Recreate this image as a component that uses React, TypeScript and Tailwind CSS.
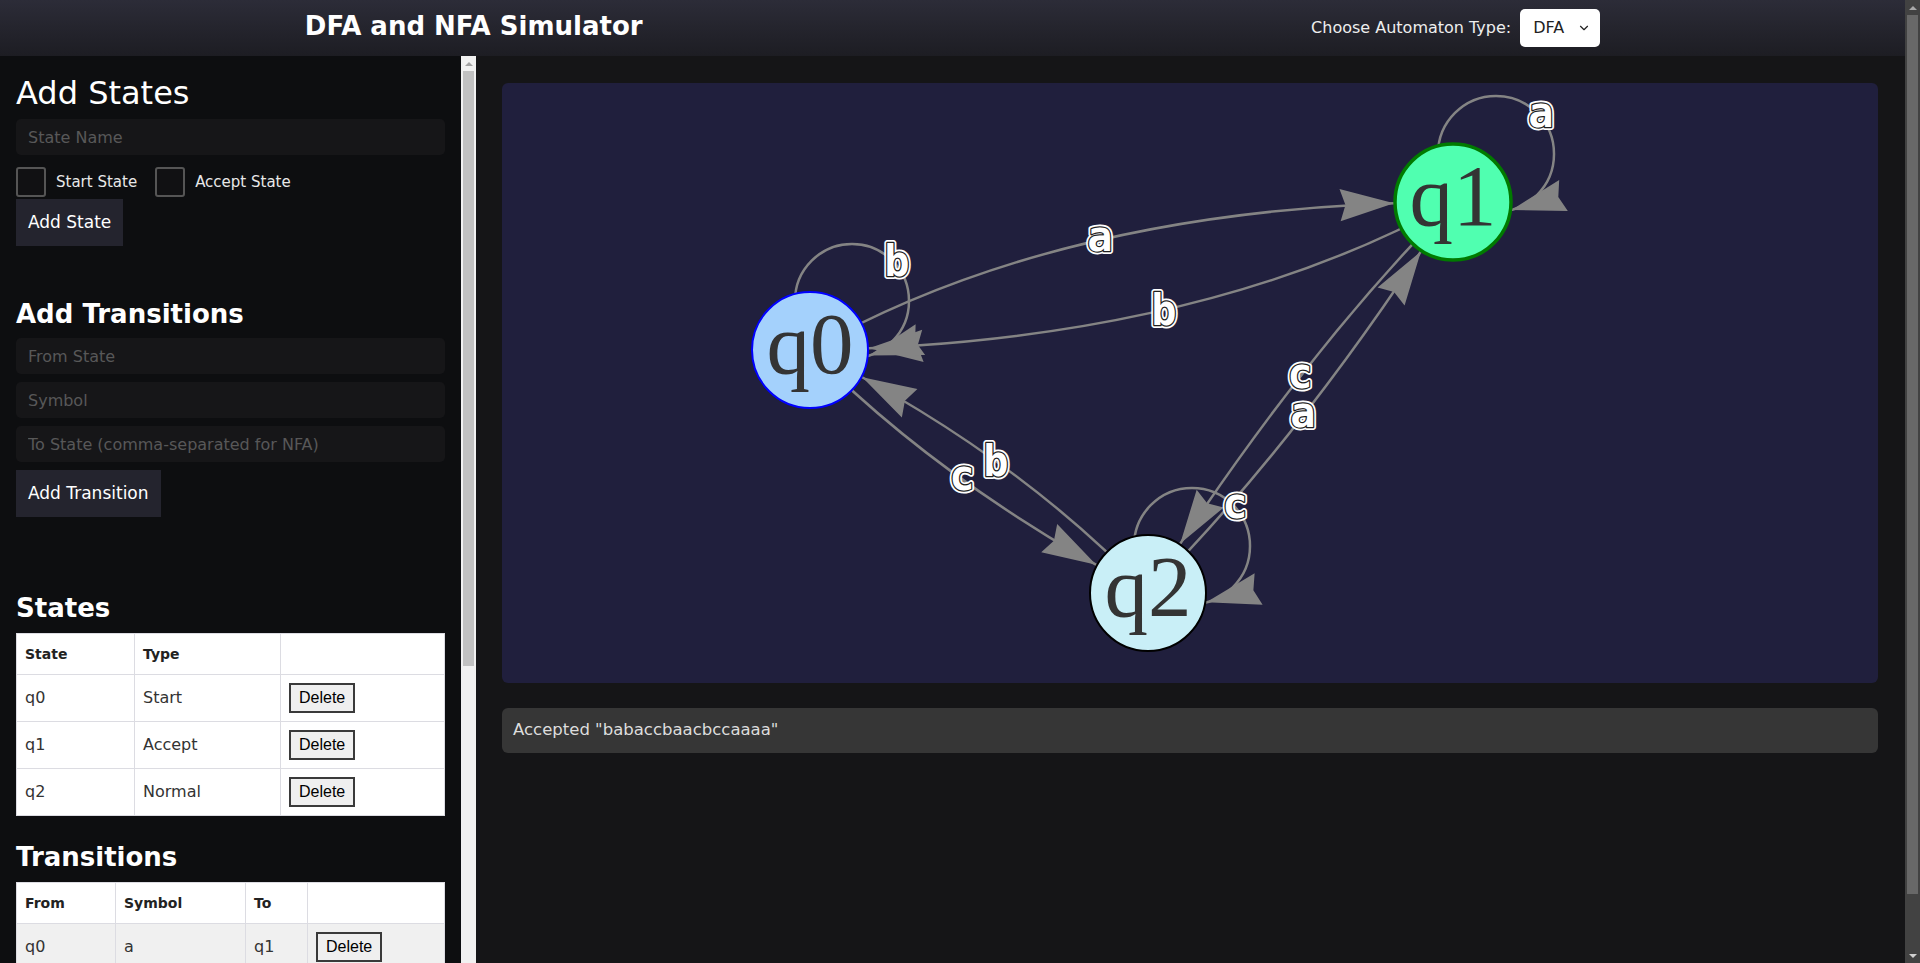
import { useState } from 'react';
import { ChevronDown } from 'lucide-react';

type NodeId = 'q0' | 'q1' | 'q2';
type Pt = [number, number];

// graph coordinates are page pixels, the svg viewBox starts at the canvas corner
const NODES: Record<NodeId, { x: number; y: number; fill: string; stroke: string; sw: number }> = {
  q0: { x: 810, y: 350, fill: '#a4d1fc', stroke: '#0000ff', sw: 2 },
  q1: { x: 1453, y: 202, fill: '#50ffb0', stroke: '#007a00', sw: 3.5 },
  q2: { x: 1148, y: 593, fill: '#c9eff7', stroke: '#000000', sw: 2 },
};
const R = 58;
const ARROW = 54;
const EDGE = '#848484';

const EDGES: { from: NodeId; to: NodeId; c: Pt; label: string; at: Pt }[] = [
  { from: 'q0', to: 'q1', c: [1068, 204], label: 'a', at: [1100, 240] },
  { from: 'q1', to: 'q0', c: [1196, 344], label: 'b', at: [1164, 310] },
  { from: 'q1', to: 'q2', c: [1299, 357], label: 'c', at: [1300, 377] },
  { from: 'q2', to: 'q1', c: [1305, 435], label: 'a', at: [1303, 416] },
  { from: 'q0', to: 'q2', c: [945, 487], label: 'c', at: [962, 479] },
  { from: 'q2', to: 'q0', c: [1013, 451], label: 'b', at: [996, 461] },
];

const LOOPS: { node: NodeId; c: Pt; r: number; label: string; at: Pt }[] = [
  { node: 'q0', c: [852, 301], r: 57, label: 'b', at: [897, 261] },
  { node: 'q1', c: [1496, 154], r: 58, label: 'a', at: [1541, 116] },
  { node: 'q2', c: [1192, 546], r: 58, label: 'c', at: [1235, 507] },
];

const quad = (p0: Pt, c: Pt, p2: Pt, t: number): Pt => {
  const u = 1 - t;
  return [u * u * p0[0] + 2 * u * t * c[0] + t * t * p2[0], u * u * p0[1] + 2 * u * t * c[1] + t * t * p2[1]];
};

const norm = (v: Pt): Pt => {
  const l = Math.hypot(v[0], v[1]);
  return [v[0] / l, v[1] / l];
};

const arrowPoints = (tip: Pt, d: Pt) => {
  const n: Pt = [-d[1], d[0]];
  const pts: Pt[] = [
    tip,
    [tip[0] - ARROW * d[0] + 0.3 * ARROW * n[0], tip[1] - ARROW * d[1] + 0.3 * ARROW * n[1]],
    [tip[0] - 0.9 * ARROW * d[0], tip[1] - 0.9 * ARROW * d[1]],
    [tip[0] - ARROW * d[0] - 0.3 * ARROW * n[0], tip[1] - ARROW * d[1] - 0.3 * ARROW * n[1]],
  ];
  return pts.map((p) => p.join(',')).join(' ');
};

const edgeArrow = (p0: Pt, c: Pt, p2: Pt) => {
  let lo = 0.5;
  let hi = 1;
  for (let i = 0; i < 30; i++) {
    const m = (lo + hi) / 2;
    const p = quad(p0, c, p2, m);
    if (Math.hypot(p[0] - p2[0], p[1] - p2[1]) > R + 1) lo = m;
    else hi = m;
  }
  const t = lo;
  const d = norm([2 * (1 - t) * (c[0] - p0[0]) + 2 * t * (p2[0] - c[0]), 2 * (1 - t) * (c[1] - p0[1]) + 2 * t * (p2[1] - c[1])]);
  return arrowPoints(quad(p0, c, p2, t), d);
};

const loopArrow = (c: Pt, r: number, n: Pt) => {
  const rn = R + 1;
  const dx = n[0] - c[0];
  const dy = n[1] - c[1];
  const d = Math.hypot(dx, dy);
  const a = (r * r - rn * rn + d * d) / (2 * d);
  const h = Math.sqrt(r * r - a * a);
  const mx = c[0] + (a * dx) / d;
  const my = c[1] + (a * dy) / d;
  const p1: Pt = [mx + (h * dy) / d, my - (h * dx) / d];
  const p2: Pt = [mx - (h * dy) / d, my + (h * dx) / d];
  const p = p1[0] > p2[0] ? p1 : p2;
  const th = Math.atan2(p[1] - c[1], p[0] - c[0]);
  return arrowPoints(p, [-Math.sin(th), Math.cos(th)]);
};

function EdgeLabel({ text, at }: { text: string; at: Pt }) {
  const y = at[1] + (text === 'b' ? 15 : 11);
  return (
    <g fontFamily="'DejaVu Sans Mono', monospace" fontSize={42} fontWeight={700} textAnchor="middle">
      <text x={at[0]} y={y} fill="white" stroke="white" strokeWidth={6} strokeLinejoin="round">
        {text}
      </text>
      <text x={at[0]} y={y} fill="white" stroke="#1e1e1e" strokeWidth={2.5} strokeLinejoin="round" paintOrder="stroke">
        {text}
      </text>
    </g>
  );
}

function Graph() {
  return (
    <svg viewBox="502 83 1376 600" className="w-full h-full block">
      {EDGES.map((e, i) => {
        const a = NODES[e.from];
        const b = NODES[e.to];
        return (
          <path
            key={i}
            d={`M${a.x} ${a.y} Q${e.c[0]} ${e.c[1]} ${b.x} ${b.y}`}
            fill="none"
            stroke={EDGE}
            strokeWidth={2.5}
          />
        );
      })}
      {LOOPS.map((l, i) => (
        <circle key={i} cx={l.c[0]} cy={l.c[1]} r={l.r} fill="none" stroke={EDGE} strokeWidth={2.5} />
      ))}
      {EDGES.map((e, i) => {
        const a = NODES[e.from];
        const b = NODES[e.to];
        return <polygon key={i} points={edgeArrow([a.x, a.y], e.c, [b.x, b.y])} fill={EDGE} />;
      })}
      {LOOPS.map((l, i) => {
        const n = NODES[l.node];
        return <polygon key={i} points={loopArrow(l.c, l.r, [n.x, n.y])} fill={EDGE} />;
      })}
      {(Object.keys(NODES) as NodeId[]).map((id) => {
        const n = NODES[id];
        return (
          <g key={id}>
            <circle cx={n.x} cy={n.y} r={R} fill={n.fill} stroke={n.stroke} strokeWidth={n.sw} />
            <text
              x={n.x}
              y={n.y + 23}
              textAnchor="middle"
              fontFamily="'Liberation Serif', serif"
              fontSize={87}
              fill="#343434"
            >
              {id}
            </text>
          </g>
        );
      })}
      {EDGES.map((e, i) => (
        <EdgeLabel key={i} text={e.label} at={e.at} />
      ))}
      {LOOPS.map((l, i) => (
        <EdgeLabel key={i} text={l.label} at={l.at} />
      ))}
    </svg>
  );
}

// classic scrollbar look (the screenshot shows them, headless does not paint real ones)
function PageScrollbar() {
  return (
    <div className="w-[15px] shrink-0 h-screen bg-[#424242] flex flex-col items-center">
      <div className="h-[15px] flex items-center justify-center">
        <div className="border-x-4 border-x-transparent border-b-4 border-b-[#a8a8a8]" />
      </div>
      <div className="w-[11px] h-[879px] bg-[#686868]" />
      <div className="flex-1" />
      <div className="h-[15px] flex items-center justify-center">
        <div className="border-x-4 border-x-transparent border-t-4 border-t-[#d0d0d0]" />
      </div>
    </div>
  );
}

function SidebarScrollbar() {
  return (
    <div className="w-[15px] shrink-0 bg-[#f1f1f1] flex flex-col items-center">
      <div className="h-[15px] flex items-center justify-center">
        <div className="border-x-4 border-x-transparent border-b-4 border-b-[#a3a3a3]" />
      </div>
      <div className="w-[11px] h-[595px] bg-[#c1c1c1]" />
    </div>
  );
}

const inputCls =
  'block w-full h-9 rounded-[5px] bg-[#161618] px-3 text-base text-white placeholder:text-[#585858] outline-none';
const deleteCls =
  "h-[30px] px-2 border-2 border-[#3a3a3a] bg-[#efefef] text-base text-black font-['Liberation_Sans',Arial,sans-serif]";
const cellCls = 'border border-[#dcdce2] px-2';
const btnCls = 'h-[47px] px-3 bg-[#24242e] text-[17px] text-white';

export default function App() {
  const [stateName, setStateName] = useState('');
  const [isStart, setIsStart] = useState(false);
  const [isAccept, setIsAccept] = useState(false);

  const states = [
    { name: 'q0', type: 'Start' },
    { name: 'q1', type: 'Accept' },
    { name: 'q2', type: 'Normal' },
  ];

  const transitions = [
    ['q0', 'a', 'q1'],
    ['q0', 'b', 'q0'],
    ['q0', 'c', 'q2'],
    ['q1', 'a', 'q1'],
    ['q1', 'b', 'q0'],
    ['q1', 'c', 'q2'],
    ['q2', 'a', 'q1'],
    ['q2', 'b', 'q0'],
    ['q2', 'c', 'q2'],
  ];

  return (
    <div className="flex h-screen overflow-hidden bg-[#151517] text-white font-['DejaVu_Sans',sans-serif]">
      <div className="flex-1 min-w-0 flex flex-col">
        <header className="h-14 shrink-0 flex items-center justify-between px-[16%] bg-linear-to-b from-[#2c2c38] to-[#1d1d23]">
          <h1 className="text-[26px] font-bold mb-1">DFA and NFA Simulator</h1>
          <div className="flex items-center gap-[9px]">
            <span className="text-base text-[#eeeeee]">Choose Automaton Type:</span>
            <div className="h-[38px] w-20 bg-white rounded-[5px] flex items-center pl-[13px] gap-[13px] text-[#222] text-base">
              DFA
              <ChevronDown size={14} strokeWidth={2} />
            </div>
          </div>
        </header>

        <div className="flex flex-1 min-h-0">
          <aside className="w-[461px] shrink-0 overflow-hidden bg-[#0d0e10] p-4">
            <h2 className="mt-[2px] text-[32px] leading-[38px]">Add States</h2>
            <input
              className={`mt-[7px] ${inputCls}`}
              placeholder="State Name"
              value={stateName}
              onChange={(e) => setStateName(e.target.value)}
            />
            <div className="mt-3 h-[30px] flex items-center text-[15px] text-[#e8e8e8]">
              <label className="flex items-center gap-[10px]">
                <input
                  type="checkbox"
                  checked={isStart}
                  onChange={() => setIsStart(!isStart)}
                  className="appearance-none w-[30px] h-[30px] rounded-[3px] border-2 border-[#555] bg-[#111113]"
                />
                Start State
              </label>
              <label className="ml-[18px] flex items-center gap-[10px]">
                <input
                  type="checkbox"
                  checked={isAccept}
                  onChange={() => setIsAccept(!isAccept)}
                  className="appearance-none w-[30px] h-[30px] rounded-[3px] border-2 border-[#555] bg-[#111113]"
                />
                Accept State
              </label>
            </div>
            <button className={`mt-[2px] ${btnCls}`}>Add State</button>

            <h2 className="mt-[52px] text-[26px] leading-8 font-bold">Add Transitions</h2>
            <input className={`mt-2 ${inputCls}`} placeholder="From State" />
            <input className={`mt-2 ${inputCls}`} placeholder="Symbol" />
            <input className={`mt-2 ${inputCls}`} placeholder="To State (comma-separated for NFA)" />
            <button className={`mt-2 ${btnCls}`}>Add Transition</button>

            <h2 className="mt-[75px] text-[26px] leading-8 font-bold">States</h2>
            <table className="mt-[9px] w-full border-collapse bg-white text-[#333] text-left">
              <thead>
                <tr className="h-[41px]">
                  <th className={`${cellCls} w-[118px] text-sm font-bold text-[#222]`}>State</th>
                  <th className={`${cellCls} w-[146px] text-sm font-bold text-[#222]`}>Type</th>
                  <th className={cellCls}></th>
                </tr>
              </thead>
              <tbody>
                {states.map((s) => (
                  <tr key={s.name} className="h-[47px]">
                    <td className={cellCls}>{s.name}</td>
                    <td className={cellCls}>{s.type}</td>
                    <td className={cellCls}>
                      <button className={deleteCls}>Delete</button>
                    </td>
                  </tr>
                ))}
              </tbody>
            </table>

            <h2 className="mt-[25px] text-[26px] leading-8 font-bold">Transitions</h2>
            <table className="mt-[9px] w-full border-collapse bg-white text-[#333] text-left">
              <thead>
                <tr className="h-[41px]">
                  <th className={`${cellCls} w-[99px] text-sm font-bold text-[#222]`}>From</th>
                  <th className={`${cellCls} w-[130px] text-sm font-bold text-[#222]`}>Symbol</th>
                  <th className={`${cellCls} w-[62px] text-sm font-bold text-[#222]`}>To</th>
                  <th className={cellCls}></th>
                </tr>
              </thead>
              <tbody>
                {transitions.map(([from, sym, to], i) => (
                  <tr key={i} className={`h-[47px] ${i % 2 === 0 ? 'bg-[#f0f0f0]' : 'bg-white'}`}>
                    <td className={cellCls}>{from}</td>
                    <td className={cellCls}>{sym}</td>
                    <td className={cellCls}>{to}</td>
                    <td className={cellCls}>
                      <button className={deleteCls}>Delete</button>
                    </td>
                  </tr>
                ))}
              </tbody>
            </table>
          </aside>
          <SidebarScrollbar />

          <main className="flex-1 min-w-0 pl-[26px] pr-[27px] pt-[27px]">
            <div className="h-[600px] rounded-md bg-[#201f3d] overflow-hidden">
              <Graph />
            </div>
            <div className="mt-[25px] h-[45px] rounded-md bg-[#363636] flex items-center px-[11px] text-[16.5px] text-[#dddddd]">
              Accepted "babaccbaacbccaaaa"
            </div>
          </main>
        </div>
      </div>
      <PageScrollbar />
    </div>
  );
}
